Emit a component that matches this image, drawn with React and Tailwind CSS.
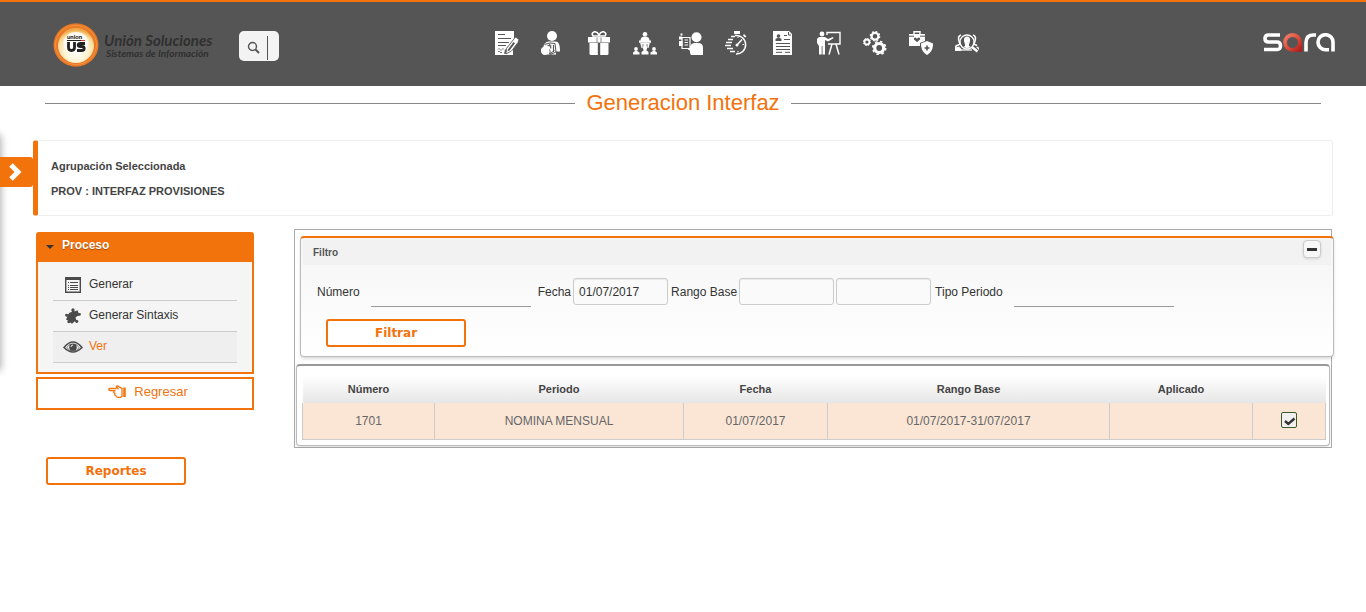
import React from "react";

const G = "#555555";

function DocPen() {
  return (
    <>
      <path d="M0 0h19v8l-9 11-1 4 4-1 5-4v6H0z" />
      <path d="M3 3.500h7M3 7.500h13M3 11.500h11M3 14.500h8" stroke={G} strokeWidth="1" />
      <path d="M3 18.500q1-2 2 0t2 0 2 0M3 21q1-2 2 0t2 0" stroke={G} strokeWidth=".8" fill="none" />
      <path d="M20.500 6l3.500 2.500-1 3-6.500 8.500-5.500 3 .5-5.500z" stroke={G} strokeWidth=".8" />
      <path d="M13 18.500l5.500-7.500 1.500 1.200-5.500 7.300-2 1z" fill={G} />
    </>
  );
}
function PersonMoney() {
  return (
    <>
      <circle cx="11" cy="5" r="5" />
      <path d="M2.500 17c0-4 2-6 5-6.500h6.500c4 0 5 3 5 10h-4v3H6z" />
      <path d="M3.500 13.500l5.500-1.500 5 .5 1 8.500-6 2.500" fill="none" stroke={G} strokeWidth="1" />
      <path d="M6.500 14.500l4 .5M8.500 13l1.500 4.500M12.500 14v7" stroke={G} strokeWidth="1.100" />
      <path d="M8.500 18.500q1.500 2 0 4.500l5-3.500" fill="none" stroke={G} strokeWidth="1" />
      <circle cx="4" cy="19.800" r="4.200" />
    </>
  );
}
function Gift() {
  return (
    <>
      <path d="M12 5H6Q4 2 7 .9q3-.7 5 3 2-3.700 5-3Q20 2 18 5z" fill="none" stroke="#fff" strokeWidth="1.600" />
      <path d="M1 6h22v5.500H1zM2.500 12h8.300v12H4q-1.500 0-1.500-1.500zM13.200 12h8.300v10.500q0 1.500-1.500 1.500h-6.800z" />
      <path d="M10 6.500v5M14 6.500v5" stroke={G} strokeWidth=".7" />
    </>
  );
}
function Meeting() {
  return (
    <>
      <circle cx="12" cy="3.200" r="2.300" />
      <path d="M7.500 9.500q0-4 4.500-4t4.500 4zM6 9.500h12v2.200H6zM7.200 12h9.600l-1.300 5H8.500z" />
      <path d="M10 13v4M14 13v4" stroke={G} strokeWidth=".8" />
      <circle cx="3" cy="18" r="1.900" />
      <circle cx="12" cy="17" r="2.200" />
      <circle cx="21" cy="18" r="1.900" />
      <path d="M0 23.500V21.500l2-1.500h2l2.500 1.500v2zM8.500 23.500V21l2.500-2h2l2.500 2v2.500zM17.500 23.500v-2L20 20h2l2 1.500v2z" />
    </>
  );
}
function PersonDoc() {
  return (
    <>
      <circle cx="17.500" cy="6.200" r="5" />
      <path d="M11 22v-6q1-4 5-4h3q5 0 5 5v7H12z" />
      <path d="M3 6.500h8v11H3z" fill={G} stroke="#fff" strokeWidth="1.200" />
      <path d="M5.500 9h3.500M5.500 11.500h3.500M5.500 14h3.500" stroke="#fff" />
      <path d="M0 10h3.500v5H0zM1.500 2.500h2v2h-2zM0 5.500h3v3H0zM9 17l5 1.500v3L9 18.500z" />
    </>
  );
}
function Stopwatch() {
  return (
    <>
      <path d="M9 0h6v3H9zM19 3l2.500 2.500-1.500 1L18 4.500z" />
      <path d="M10 4.500a9.300 9.300 0 1 1 1 18.500" fill="none" stroke="#fff" strokeWidth="1.500" />
      <path d="M6 5.500h4M3 8.500h5M1 11.500h6M0 14.500h6M2 17.500h6M5 20.500h5" stroke="#fff" strokeWidth="1.400" />
      <path d="M12 14l5-5.500" stroke="#fff" strokeWidth="1.500" />
      <circle cx="12" cy="14" r="1.500" />
      <path d="M13 6v1M19 13.500h-1.500M13 21.500v-1.500" stroke="#fff" />
    </>
  );
}
function Resume() {
  return (
    <>
      <path d="M2 0h16l3 3v21H2z" />
      <circle cx="7.500" cy="5" r="1.800" fill={G} />
      <path d="M4.500 10V8l2-1.300h2l2 1.300v2z" fill={G} />
      <path d="M13 4.500h3M17.500 1v3H20M13 8.500h6M5 12.500h14M5 15.500h14M5 18.500h14M5 21.300h6M14 21.300h5" fill="none" stroke={G} strokeWidth="1" />
    </>
  );
}
function Teacher() {
  return (
    <>
      <circle cx="5" cy="3" r="2.400" />
      <path d="M2 6h6l3 2 5-2 .5 1.300L11 10.500 8 9v14.500H5.500V15h-.8v8.500H2V15L0 12V8z" />
      <path d="M10 4V1.500h13V13H11" fill="none" stroke="#fff" strokeWidth="1.400" />
      <path d="M15 13l-3 10.500M19 13l3 10.500" stroke="#fff" strokeWidth="1.500" />
    </>
  );
}
function Gears() {
  return (
    <g fill="none" stroke="#fff">
      <circle cx="12" cy="5.200" r="3.400" strokeWidth="2.200" />
      <circle cx="12" cy="5.200" r="4.700" strokeWidth="1.200" strokeDasharray="1.800 1.890" />
      <circle cx="3.900" cy="11" r="2.500" strokeWidth="1.800" />
      <circle cx="3.900" cy="11" r="3.600" strokeWidth="1" strokeDasharray="1.400 1.427" />
      <circle cx="16.200" cy="17" r="4.500" strokeWidth="3.200" />
      <circle cx="16.200" cy="17" r="6.500" strokeWidth="1.600" strokeDasharray="2.500 2.605" />
    </g>
  );
}
function CaseShield() {
  return (
    <>
      <path d="M5 3V.8h6V3" fill="none" stroke="#fff" strokeWidth="1.400" />
      <path d="M0 3h16v7l-5 2v3H0z" />
      <path d="M0 5.200h5M11 5.200h5" stroke={G} />
      <path d="M8 11L5 8.500V7l1.500-.5L8 7.700l1.500-1.200L11 7v1.500z" fill={G} />
      <path d="M18 10l6 2.500c0 6-2 9-6 11.500-4-2.500-6-5.500-6-11.500z" />
      <path d="M18 14.500v5M15.500 17h5" stroke={G} strokeWidth="1.600" />
    </>
  );
}
function PeopleSearch() {
  return (
    <>
      <path d="M6 4q-3.500 1-2 6l1 3-4 2-.5 4h5M18 4q3.500 1 2 6l-1 3 3 1.500" fill="none" stroke="#fff" strokeWidth="1.600" />
      <path d="M12 5.500q3.500 0 3 4.500L14 13.500V15l2 1q-4 2-8 0l2-1v-1.500L9 10Q8.500 5.500 12 5.500z" />
      <circle cx="12" cy="11" r="7" fill="none" stroke="#fff" strokeWidth="1.300" />
      <path d="M17 16l5.500 4.500" stroke="#fff" strokeWidth="2.500" />
      <path d="M0 17l4-1.500L6.500 18v1.700H0zM24 19l-3-3 2-.5 1 1.500z" />
      <path d="M5 19h12" stroke="#fff" strokeWidth="1.200" />
    </>
  );
}

const modules = [
  ["Documentos", DocPen],
  ["Nómina", PersonMoney],
  ["Beneficios", Gift],
  ["Organización", Meeting],
  ["Selección", PersonDoc],
  ["Tiempos", Stopwatch],
  ["Hoja de vida", Resume],
  ["Capacitación", Teacher],
  ["Configuración", Gears],
  ["Salud ocupacional", CaseShield],
  ["Consultas", PeopleSearch],
];

function UnionLogo() {
  return (
    <svg className="h-11 w-[46px] shrink-0" viewBox="0 0 46 44">
      <defs>
        <radialGradient id="sun" cx=".5" cy=".65" r=".6">
          <stop offset="0" stopColor="#fff" />
          <stop offset=".5" stopColor="#fff6d8" />
          <stop offset=".85" stopColor="#f8dc9c" />
          <stop offset="1" stopColor="#f0a848" />
        </radialGradient>
      </defs>
      <ellipse cx="23" cy="22" rx="22.500" ry="21.700" fill="#e97826" />
      <ellipse cx="23" cy="22" rx="20.500" ry="19.500" fill="none" stroke="#f3943e" />
      <ellipse cx="23" cy="22.500" rx="18" ry="17.500" fill="url(#sun)" />
      <ellipse cx="23" cy="20" rx="12.500" ry="11" fill="#fff" opacity=".8" />
      <text x="21.500" y="16" textAnchor="middle" fontSize="6" fontWeight="900" fontFamily="Lato, sans-serif" fill="#222">union</text>
      <path d="M14 17.500h14" stroke="#222" />
      <path d="M28 17.500h4" stroke="#d33" />
      <path d="M15.500 19v5.500q0 3 3 3t3-3V19M32 20.500h-4.500q-2.300 0-2.300 1.500t2.300 1.500h1.200q2.500 0 2.500 2t-2.500 2H24" fill="none" stroke="#222" strokeWidth="2.800" />
    </svg>
  );
}

function SaraLogo() {
  return (
    <svg className="h-5 w-[72px]" viewBox="0 0 72 20" role="img" aria-label="sara" fill="none" strokeWidth="3.600">
      <defs>
        <linearGradient id="red" x1="0" y1="0" x2="1" y2="1">
          <stop offset="0" stopColor="#f58a76" />
          <stop offset=".5" stopColor="#e0503f" />
          <stop offset="1" stopColor="#a81414" />
        </linearGradient>
      </defs>
      <path d="M17 2H5.500Q2 2 2 5.500T5.500 9h8.500q3.500 0 3.500 3.800t-3.500 3.700H1" stroke="#fff" />
      <path fillRule="evenodd" d="M29.500 0a9.300 9.300 0 1 0 0 18.700H39V9.500A9.400 9.400 0 0 0 29.500 0zm0 4a5.500 5.500 0 1 1 0 11 5.500 5.500 0 0 1 0-11z" fill="url(#red)" />
      <path d="M43 18.500v-9q0-7.500 7.500-7.500H53" stroke="#fff" />
      <path d="M70 18.500V9.500a7.500 7.500 0 1 0-7.500 7.200H66" stroke="#fff" />
    </svg>
  );
}

const links = [
  {
    label: "Generar",
    icon: (
      <svg viewBox="0 0 16 16" className="mx-0.5 h-4 w-4" fill="none" stroke="#4a4a4a">
        <path d="M.7.700h14.600v14.600H.7z" strokeWidth="1.400" />
        <path d="M0 1.500h16" strokeWidth="3" />
        <path d="M3 5.500h1M3 8.500h1M3 10.500h1M3 12.500h1M5 5.500h8M5 8.500h8M5 10.500h8M5 12.500h8" />
      </svg>
    ),
  },
  {
    label: "Generar Sintaxis",
    icon: (
      <svg viewBox="0 0 16 16" className="mx-0.5 h-4 w-4" fill="#4a4a4a">
        <path d="M4 5l3-1.200-.8-1.500Q6.500.300 8 .3t1.600 1.500L9.500 3.500l3-1.200 1.200 2.900 1.200-.3q1.300.3 1 1.500t-1.600 1.300l-1.800.3-2 1.500.8 2.500 1.500.3q1.200.8.300 2t-2.200.5l-1-1.600-3 2.500-1.600-1.200Q4 15.800 2.800 14.800t.2-2.200L1 11.500l1.500-3-1.300.3Q-.2 8.200.1 6.900t1.700-1.100l1.700.8z" />
      </svg>
    ),
  },
  {
    label: "Ver",
    active: true,
    icon: (
      <svg viewBox="0 0 20 12" className="h-3 w-5">
        <path d="M1 6.500Q10-4.500 19 6.500 10 15.500 1 6.500z" fill="#f5f5f5" stroke="#4a4a4a" strokeWidth="1.500" />
        <path d="M4 6.500q2-3 4-3.500-2 3.500 0 7Q6 9.500 4 6.500M16 6.500q-2-3-4-3.500 2 3.500 0 7 2-.5 4-3.500" fill="none" stroke="#4a4a4a" strokeWidth=".7" />
        <circle cx="10" cy="6.300" r="3.700" fill="#4a4a4a" />
        <path d="M8 6q0-2 2-2" stroke="#fff" strokeWidth=".9" fill="none" />
      </svg>
    ),
  },
];

const columns = [
  ["Número", "w-[132px]"],
  ["Periodo", "w-[249px]"],
  ["Fecha", "w-[144px]"],
  ["Rango Base", "w-[282px]"],
  ["Aplicado", "w-[143px]"],
  ["", "w-[73px]"],
];
const row = ["1701", "NOMINA MENSUAL", "01/07/2017", "01/07/2017-31/07/2017", ""];

const actionButton =
  "block h-7 w-[140px] rounded-[3px] border-2 border-[#f2720c] bg-white text-center font-['DejaVu_Sans',sans-serif] text-xs font-bold text-[#f2720c]";
const boxInput = "h-[27px] w-[95px] rounded-[3px] border border-[#ccc] bg-[#fafafa] px-[5px] text-xs text-[#333] shadow-[inset_0_1px_1px_#00000010]";
const lineInput = "h-[31px] w-40 border-b border-[#999] bg-transparent text-xs";

export default function App() {
  return (
    <div className="relative min-h-screen overflow-x-hidden bg-white font-['Liberation_Sans',Arial,sans-serif] text-xs text-[#333]">
      <header className="flex h-[86px] items-center border-t-2 border-[#f2720c] bg-[#555] pr-[31px] pb-0.5 pl-[53px]">
        <a href="#inicio" className="flex w-[186px] shrink-0 items-center gap-[5px] pt-1 whitespace-nowrap text-[#303030]">
          <UnionLogo />
          <span className="font-['Lato',sans-serif] font-bold italic">
            <span className="block text-[15px] leading-4">Unión Soluciones</span>
            <span className="block pl-0.5 text-[10px] leading-[11px]">Sistemas de Información</span>
          </span>
        </a>
        <label className="mt-1.5 flex h-[30px] w-10 shrink-0 items-center rounded-[5px] bg-[#f3f3f3] pl-2">
          <svg viewBox="0 0 14 14" className="mt-1 h-3.5 w-3.5 shrink-0" fill="none" stroke="#555">
            <circle cx="5.500" cy="5.500" r="4" strokeWidth="1.400" />
            <path d="M8.500 8.500l3.500 3.500" strokeWidth="2" />
          </svg>
          <input aria-label="Buscar" className="mt-1 ml-1.5 h-6 w-2 border-l border-[#555] outline-none" />
        </label>
        <nav className="ml-[216px] flex shrink-0 gap-[22px]">
          {modules.map(([name, Icon]) => (
            <a key={name} href="#modulo" aria-label={name}>
              <svg viewBox="0 0 24 24" className="h-6 w-6" fill="#fff">
                <Icon />
              </svg>
            </a>
          ))}
        </nav>
        <div className="ml-auto">
          <SaraLogo />
        </div>
      </header>

      <div className="absolute top-[135px] -left-5 h-[235px] w-5 shadow-[0_0_8px_#00000066]" />
      <button aria-label="Abrir menú" className="absolute top-[157px] left-0 flex h-[30px] w-[33px] items-center rounded-r-[3px] bg-[#f2720c] pl-[9px]">
        <svg viewBox="0 0 13 18" className="h-[18px] w-[13px]" fill="none" stroke="#fff" strokeWidth="5">
          <path d="M2 2l7 7-7 7" />
        </svg>
      </button>

      <main className="pr-[33px] pl-[33px]">
        <div className="mx-3 flex h-[34px] items-center gap-[11px]">
          <span className="h-px flex-1 bg-[#888]" />
          <h1 className="text-[22px] leading-[26px] text-[#f2720c]">Generacion Interfaz</h1>
          <span className="h-px flex-1 bg-[#888]" />
        </div>

        <section className="mt-5 rounded-[3px] border border-l-[5px] border-[#eee] border-l-[#f2720c] px-[13px] pt-[13px] pb-[11px] text-[11px] leading-[25px] font-bold text-[#444]">
          <p>Agrupación Seleccionada</p>
          <p>PROV : INTERFAZ PROVISIONES</p>
        </section>

        <div className="mt-[13px] flex items-start gap-10">
          <aside className="ml-[3px] w-[218px] shrink-0 pt-[3px]">
            <div className="rounded-t-[3px] border-2 border-[#f2720c] bg-[#f5f5f5]">
              <button className="flex h-7 w-full items-center gap-2 bg-[#f2720c] pb-1.5 pl-2 text-xs font-bold text-white [text-shadow:0_1px_1px_#00000055]">
                <span className="mt-1 border-x-4 border-t-4 border-x-transparent border-t-[#333]" />
                Proceso
              </button>
              <ul className="px-[15px] pt-2 pb-[9px]">
                {links.map((l) => (
                  <li key={l.label} className={l.active ? "border-b border-[#ccc] bg-[#efefef]" : "border-b border-[#ccc]"}>
                    <a href="#proceso" className={l.active ? "flex h-[30px] items-center gap-1.5 pl-2.5 text-[#f2720c]" : "flex h-[30px] items-center gap-1.5 pl-2.5 text-[#333]"}>
                      {l.icon}
                      <span className="pb-[3px]">{l.label}</span>
                    </a>
                  </li>
                ))}
              </ul>
            </div>
            <a href="#regresar" className="mt-[3px] flex h-[33px] items-center justify-center gap-2 border-2 border-[#f2720c] bg-white pb-1 pl-1.5 text-[13px] text-[#f2720c]">
              <svg viewBox="0 0 18 14" className="h-3.5 w-[18px]" fill="none" stroke="#f2720c" strokeWidth="1.300">
                <path d="M8.500 3.500H2Q.8 3.500.8 4.600T2 5.700h5.500M6 6q-.8 1.800.9 2.300-.6 1.700.9 2.200.3 1.800 2.200 1.800h2.500l1.500-1V3.500L9.500 1Q8 .800 8.500 2l2 2.200" />
                <path d="M16.500 2.500v9.500" strokeWidth="2.500" />
              </svg>
              Regresar
            </a>
            <button className={actionButton + " mt-[47px] ml-2.5"}>Reportes</button>
          </aside>

          <div className="mr-px min-w-0 flex-1 border border-[#aaa] pt-1.5 pb-px">
            <section className="-mr-[3px] ml-[5px] rounded-[4px] border border-t-2 border-[#bbb] border-t-[#f2720c] bg-linear-to-b from-[#f5f5f5] to-white px-0.5 pt-0.5 pb-[9px] shadow-[0_2px_3px_#00000022]">
              <div className="flex h-[25px] items-start justify-between bg-[#f2f2f2] pr-2.5 pl-2.5">
                <h2 className="pt-[5px] text-[10px] leading-[15px] font-bold text-[#555]">Filtro</h2>
                <button aria-label="Contraer" className="flex h-[18px] w-[18px] items-center justify-center rounded-[4px] border border-[#ccc] bg-[#f7f7f7] shadow-sm">
                  <span className="h-[3px] w-2.5 bg-[#333]" />
                </button>
              </div>
              <form className="px-3.5 pt-[11px]" onSubmit={(e) => e.preventDefault()}>
                <div className="flex items-center whitespace-nowrap">
                  <label htmlFor="numero" className="mr-[11px]">Número</label>
                  <input id="numero" className={lineInput} />
                  <label htmlFor="fecha" className="ml-[7px]">Fecha</label>
                  <input id="fecha" defaultValue="01/07/2017" className={boxInput + " ml-0.5"} />
                  <label htmlFor="desde" className="mr-0.5 ml-[3px]">Rango Base</label>
                  <input id="desde" className={boxInput} />
                  <input aria-label="Rango Base hasta" className={boxInput + " ml-0.5"} />
                  <label htmlFor="tipo" className="mr-[11px] ml-1">Tipo Periodo</label>
                  <input id="tipo" className={lineInput} />
                </div>
                <button className={actionButton + " mt-3 ml-[9px]"}>Filtrar</button>
              </form>
            </section>

            <section className="mt-[7px] mr-px ml-px rounded-[4px] border border-t-2 border-[#bbb] border-t-[#999] bg-white pt-2.5 pr-1.5 pb-[5px] pl-[5px] shadow-[0_1px_2px_#00000022]">
              <table className="w-full table-fixed border-collapse text-center">
                <thead>
                  <tr className="h-[27px] bg-linear-to-b from-white to-[#e6e6e6] text-[11px] text-[#444]">
                    {columns.map(([name, width], i) => (
                      <th key={i} className={width + " font-bold"}>{name}</th>
                    ))}
                  </tr>
                </thead>
                <tbody>
                  <tr className="h-9 bg-[#fbe6d6] text-[#666]">
                    {row.map((v, i) => (
                      <td key={i} className="border border-t-0 border-[#ccc]">{v}</td>
                    ))}
                    <td className="border border-t-0 border-[#ccc]">
                      <span className="relative mx-auto mb-0.5 block h-4 w-4">
                        <input type="checkbox" defaultChecked aria-label="Seleccionar 1701" className="peer block h-4 w-4 appearance-none rounded-[2px] border border-[#3c5a2a] bg-[#f0f0f0]" />
                        <svg viewBox="0 0 16 16" className="pointer-events-none invisible absolute inset-0 h-4 w-4 peer-checked:visible" fill="none" stroke="#333" strokeWidth="2.400">
                          <path d="M4 9l3.300 3L13.500 6.500" />
                        </svg>
                      </span>
                    </td>
                  </tr>
                </tbody>
              </table>
            </section>
          </div>
        </div>
      </main>
    </div>
  );
}
